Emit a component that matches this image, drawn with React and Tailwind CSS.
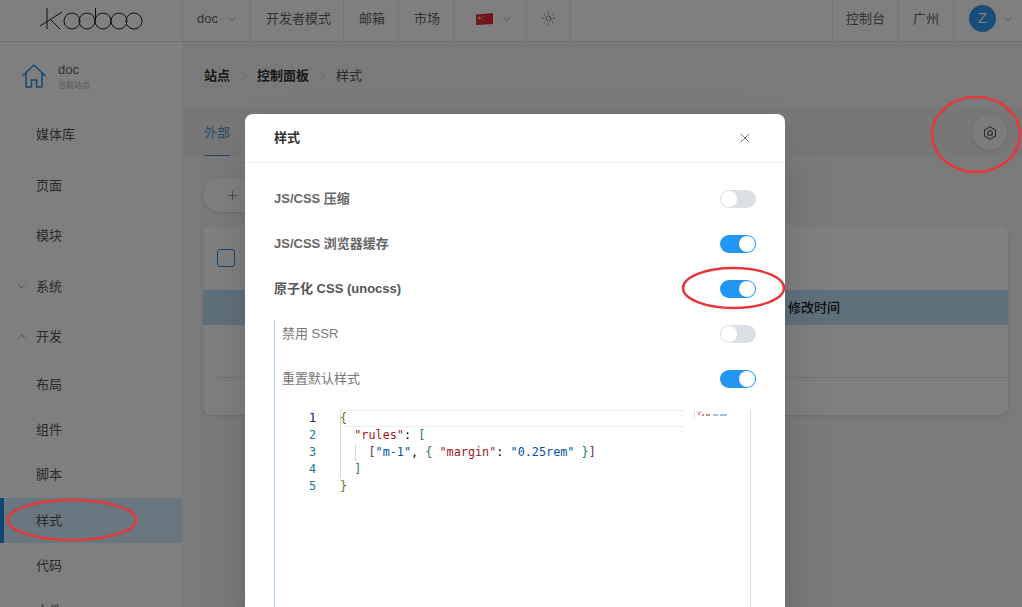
import { ChevronDown, ChevronRight, ChevronUp, Plus, Sun, X } from "lucide-react";

const sans = "font-['Liberation_Sans','Noto_Sans_CJK_SC',sans-serif]";

const Toggle = ({ on }) => (
  <span
    className={`flex h-[18px] w-[36px] items-center rounded-full p-px ${
      on ? "justify-end bg-[#2196f3]" : "justify-start bg-[#dcdfe6]"
    }`}
  >
    <span className="h-[16px] w-[16px] rounded-full bg-white" />
  </span>
);

const SettingRow = ({ label, on, className }) => (
  <div className="mb-[17px] flex h-[28px] items-center justify-between">
    <span className={className}>{label}</span>
    <Toggle on={on} />
  </div>
);

const HeaderItem = ({ children, className = "" }) => (
  <div className={`flex h-full items-center border-r border-[#e8e8e8] pb-1 ${className}`}>
    {children}
  </div>
);

const SideItem = ({ label, height, active, icon }) => (
  <div
    className={`relative flex items-center pl-[36px] text-[13px] text-[#555] ${height} ${
      active ? "bg-[#d2ecff] text-[#1f3f5c]" : ""
    }`}
  >
    {active && <span className="absolute inset-y-0 left-0 w-[4px] bg-[#1f8fe8]" />}
    {icon}
    {label}
  </div>
);

const Logo = () => (
  <svg width="104" height="24" viewBox="0 0 104 24" fill="none" stroke="#222" strokeWidth="1">
    <path d="M8 0v21M1 18 23 4M11 11l10 10" />
    <circle cx="33" cy="13" r="8" />
    <circle cx="48" cy="13" r="8" />
    <path d="M56.500 0v13" />
    <circle cx="64" cy="13" r="8" />
    <circle cx="80" cy="13" r="8" />
    <circle cx="95" cy="13" r="8" />
  </svg>
);

const Flag = () => (
  <svg width="17" height="12" viewBox="0 0 17 12">
    <path d="M0 1.500 17 0v11L0 12z" fill="#e02b3a" />
    <circle cx="3.500" cy="5" r="1.500" fill="#f7d83a" />
    <circle cx="7" cy="3.500" r=".6" fill="#f7d83a" />
    <circle cx="7" cy="6.500" r=".6" fill="#f7d83a" />
  </svg>
);

const Ellipse = ({ className, width, height }) => (
  <svg className={`absolute ${className}`} width={width} height={height} fill="none">
    <ellipse
      cx={width / 2}
      cy={height / 2}
      rx={width / 2 - 2}
      ry={height / 2 - 2}
      stroke="#e5383b"
      strokeWidth="2.500"
    />
  </svg>
);

const Red = ({ children }) => <span className="text-[#a31515]">{children}</span>;
const Blue = ({ children }) => <span className="text-[#0451a5]">{children}</span>;
const Teal = ({ children }) => <span className="text-[#1f7a5c]">{children}</span>;
const Plum = ({ children }) => <span className="text-[#6b2c4a]">{children}</span>;
const Gold = ({ children }) => <span className="text-[#6f6a1e]">{children}</span>;

const Editor = () => (
  <div className="relative flex h-[200px] w-[469px] font-['DejaVu_Sans_Mono',monospace] text-[11.8px] leading-[17px]">
    <div className="w-[35px] pl-[27px] text-[#237893]">
      {[1, 2, 3, 4, 5].map((n) => (
        <div key={n} className={`h-[17px] ${n === 1 ? "text-[#0b216f]" : ""}`}>
          {n}
        </div>
      ))}
    </div>
    <div className="relative ml-[23px] w-[344px] whitespace-pre">
      <div className="absolute inset-x-0 top-0 h-[17px] border-y border-[#eeeeee]" />
      <div className="absolute top-0 left-0 h-[68px] w-px bg-[#d8d8d8]" />
      <div className="absolute top-[34px] left-[15px] h-[17px] w-px bg-[#d8d8d8]" />
      <div className="relative">
        <div className="h-[17px]"><Gold>{"{"}</Gold></div>
        <div className="h-[17px]">
          {"  "}<Red>"rules"</Red>: <Teal>[</Teal>
        </div>
        <div className="h-[17px]">
          {"    "}<Plum>[</Plum><Blue>"m-1"</Blue>, <Teal>{"{"}</Teal> <Red>"margin"</Red>: <Blue>"0.25rem"</Blue> <Teal>{"}"}</Teal><Plum>]</Plum>
        </div>
        <div className="h-[17px]">{"  "}<Teal>]</Teal></div>
        <div className="h-[17px]"><Gold>{"}"}</Gold></div>
      </div>
    </div>
    {/* minimap */}
    <svg className="mt-[1px] ml-[9px]" width="36" height="9" viewBox="0 0 36 9">
      <path d="M1 1h1M1 4h1M1 7h1M4 1h5" stroke="#999" strokeWidth=".8" />
      <path d="M5 3h2M9 4h2" stroke="#a31515" strokeWidth="1" />
      <path d="M13 4h4" stroke="#a31515" strokeWidth="1" />
      <path d="M20 4h5M27 4h7" stroke="#0451a5" strokeWidth="1" opacity=".7" />
    </svg>
    <div className="absolute top-0 left-[468px] h-full w-px bg-[#dddddd]" />
  </div>
);

const App = () => {
  return (
    <div className={`relative h-[607px] w-[1022px] overflow-hidden bg-[#f5f5f5] ${sans}`}>
      <header className="flex h-[42px] border-b border-[#e4e4e4] bg-white text-[13px] text-[#666]">
        <div className="flex w-[183px] items-start border-r border-[#e8e8e8] pt-[8px] pl-[39px]">
          <Logo />
        </div>
        <HeaderItem className="w-[68px] gap-[7px] pl-[14px]">
          doc <ChevronDown size={14} strokeWidth={1} />
        </HeaderItem>
        <HeaderItem className="w-[93px] pl-[15px]">开发者模式</HeaderItem>
        <HeaderItem className="w-[55px] pl-[15px]">邮箱</HeaderItem>
        <HeaderItem className="w-[55px] pl-[15px]">市场</HeaderItem>
        <HeaderItem className="w-[73px] gap-[7px] pl-[22px]">
          <Flag />
          <ChevronDown size={14} strokeWidth={1} />
        </HeaderItem>
        <HeaderItem className="w-[44px] pl-[14px]">
          <Sun size={15} strokeWidth={1.2} />
        </HeaderItem>
        <div className="flex-1" />
        <div className="flex h-full items-center border-x border-[#e8e8e8] pb-1 pl-[13px] w-[67px]">控制台</div>
        <HeaderItem className="w-[55px] pl-[14px]">广州</HeaderItem>
        <div className="flex h-full w-[68px] items-center gap-[5px] pb-1 pl-[15px]">
          <span className="flex h-[27px] w-[27px] items-center justify-center rounded-full bg-[#2f9bf0] text-[15px] text-white">
            Z
          </span>
          <ChevronDown size={14} strokeWidth={1} />
        </div>
      </header>

      <div className="flex h-[565px]">
        <aside className="w-[182px] shrink-0 bg-white">
          <div className="flex h-[67.500px] items-start pt-[21px] pl-[21px]">
            <svg width="26" height="26" viewBox="0 0 26 26" fill="none" stroke="#2f8fe0" strokeWidth="1.500" strokeLinejoin="round">
              <path d="M1.500 13 13 2l11.500 11M5 10.500V24h5.500v-7h5v7H21V10.500" />
            </svg>
            <div className="ml-[11px]">
              <div className="text-[13px] leading-[14px] text-[#666]">doc</div>
              <div className="mt-[4px] text-[8px] leading-[10px] text-[#aaa]">当前站点</div>
            </div>
          </div>
          <SideItem label="媒体库" height="h-[50.500px]" />
          <SideItem label="页面" height="h-[50.500px]" />
          <SideItem label="模块" height="h-[50.500px]" />
          <SideItem
            label="系统"
            height="h-[50.500px]"
            icon={<ChevronDown className="absolute left-[15px]" size={13} strokeWidth={1} />}
          />
          <SideItem
            label="开发"
            height="h-[50.500px]"
            icon={<ChevronUp className="absolute left-[15px]" size={13} strokeWidth={1} />}
          />
          <SideItem label="布局" height="h-[45.250px]" />
          <SideItem label="组件" height="h-[45.250px]" />
          <SideItem label="脚本" height="h-[45.250px]" />
          <SideItem label="样式" height="h-[45px]" active />
          <SideItem label="代码" height="h-[45px]" />
          <SideItem label="文件" height="h-[45px]" />
        </aside>

        <main className="min-w-0 flex-1">
          <div className="flex h-[68px] items-center pl-[22px] text-[13px] text-[#555]">
            <span className="font-bold text-[#333]">站点</span>
            <ChevronRight className="mx-[6px] text-[#aaa]" size={15} strokeWidth={1} />
            <span className="font-bold text-[#333]">控制面板</span>
            <ChevronRight className="mx-[6px] text-[#aaa]" size={15} strokeWidth={1} />
            <span>样式</span>
          </div>

          <div className="flex h-[46px] items-stretch justify-between bg-[#eeeeee] pl-[22px]">
            <span className="flex w-[26px] items-center justify-center border-b border-[#2f8fe0] text-[13px] text-[#4a9be0]">
              外部
            </span>
            <span className="mt-[5px] mr-[15px] flex h-[35px] w-[35px] items-center justify-center rounded-full bg-[#f8f8f8] shadow-sm">
              <svg width="14" height="14" viewBox="0 0 24 24" fill="none" stroke="#555" strokeWidth="1.800">
                <path d="M12 1.500 21.500 7v10L12 22.500 2.500 17V7z" />
                <circle cx="12" cy="12" r="4" />
              </svg>
            </span>
          </div>

          <div className="px-[21px] pt-[22px]">
            <div className="flex h-[34px] w-[180px] items-center rounded-full bg-white pl-[22px] text-[#666] shadow-sm">
              <Plus size={15} strokeWidth={1} />
            </div>

            <div className="mt-[13px] w-[805px] rounded-lg bg-white shadow-sm">
              <div className="flex h-[65px] items-center pl-[14px]">
                <span className="h-[18px] w-[18px] rounded-[3px] border border-[#2f8fe0]" />
              </div>
              <div className="flex h-[35px] items-center bg-[#bfe0fb] pl-[585px] text-[13px] font-medium text-[#222]">
                修改时间
              </div>
              <div className="ml-[14px] h-[53px] border-b border-[#e8e8e8]" />
              <div className="h-[37px]" />
            </div>
          </div>
        </main>
      </div>

      {/* dialog */}
      <div className="absolute inset-0 bg-black/50">
        <div className="mt-[114px] ml-[245px] h-[520px] w-[540px] rounded-lg bg-white shadow-2xl">
          <div className="flex h-[49px] items-center justify-between border-b border-[#eeeeee] pr-[32px] pl-[29px]">
            <span className="text-[13px] font-bold text-[#333]">样式</span>
            <X size={16} strokeWidth={1.2} className="text-[#555]" />
          </div>
          <div className="pt-[22px] pr-[29px] pl-[29px]">
            <SettingRow on={false} label="JS/CSS 压缩" className="text-[13px] font-bold text-[#666]" />
            <SettingRow on label="JS/CSS 浏览器缓存" className="text-[13px] font-bold text-[#666]" />
            <SettingRow on label="原子化 CSS (unocss)" className="text-[13px] font-bold text-[#555]" />
            <div className="border-l border-[#a9cdee] pl-[7px]">
              <SettingRow on={false} label="禁用 SSR" className="text-[13px] text-[#777]" />
              <SettingRow on label="重置默认样式" className="text-[13px] text-[#777]" />
              <Editor />
            </div>
          </div>
        </div>
      </div>

      {/* red annotation rings */}
      <Ellipse className="top-[95px] left-[930px]" width={92} height={79} />
      <Ellipse className="top-[266px] left-[681px]" width={105} height={44} />
      <Ellipse className="top-[498px] left-[6px]" width={132} height={44} />
    </div>
  );
};

export default App;
